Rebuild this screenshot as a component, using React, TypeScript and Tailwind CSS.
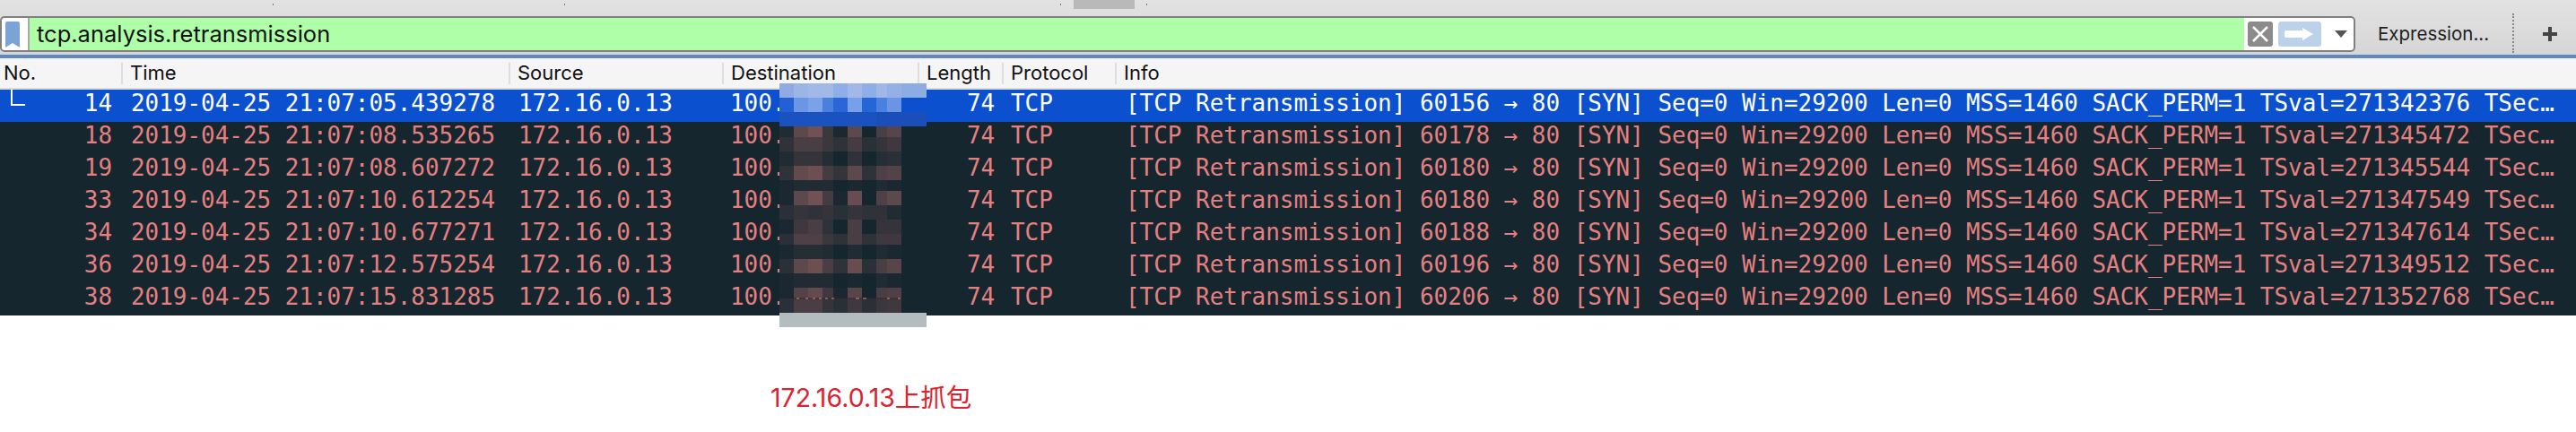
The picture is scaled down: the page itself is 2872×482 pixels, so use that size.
const COLS = 'grid grid-cols-[135px_432px_238px_218px_94px_126px_1fr]'
const MONO = "font-['DejaVu_Sans_Mono','Liberation_Mono',monospace]"

const rows = [
  { no: '14', time: '2019-04-25 21:07:05.439278', port: '60156', ts: '271342376' },
  { no: '18', time: '2019-04-25 21:07:08.535265', port: '60178', ts: '271345472' },
  { no: '19', time: '2019-04-25 21:07:08.607272', port: '60180', ts: '271345544' },
  { no: '33', time: '2019-04-25 21:07:10.612254', port: '60180', ts: '271347549' },
  { no: '34', time: '2019-04-25 21:07:10.677271', port: '60188', ts: '271347614' },
  { no: '36', time: '2019-04-25 21:07:12.575254', port: '60196', ts: '271349512' },
  { no: '38', time: '2019-04-25 21:07:15.831285', port: '60206', ts: '271352768' },
]

// mosaic over the destination column
const mosaicW = [16, 16, 16, 12, 16, 16, 16, 12, 16, 28]
const mosaicH = [16, 16, 16, 12, 16, 16, 16, 12, 16, 16, 16, 12, 16, 16, 16, 12, 16, 16]
const topRows = [
  ['#8fabe2', '#9ab5e6', '#a0b9e8', '#a2b9e6', '#8fade6', '#a1b8e8', '#8fade6', '#a0b7e8', '#94b0e6', '#8cade4'],
  ['#2360d8', '#6a96e4', '#7ba1e8', '#4a7fde', '#2b66d8', '#77a0e8', '#2465d8', '#4a80e0', '#6b95e4', '#0b50cf'],
  ['#1a52c0', '#1a52c0', '#1a52c0', '#1a52c0', '#1a52c0', '#1a52c0', '#1a52c0', '#1a4fba', '#1a4fba', '#1a4fba'],
]
const levels = [
  [0.1, 0.7, 0.9, 0.35, 0.05, 0.7, 0, 0.5, 0.65],
  [0.25, 0.5, 0.5, 0.35, 0.25, 0.45, 0.2, 0.3, 0.4],
  [0.1, 0.3, 0.3, 0.15, 0, 0.25, 0, 0.15, 0.2],
  [0.25, 0.75, 0.85, 0.45, 0.3, 0.7, 0.25, 0.55, 0.6],
  [0.05, 0.1, 0.1, 0.1, 0, 0.05, 0, 0.1, 0.05],
  [0.05, 0.7, 0.9, 0.45, 0.05, 0.8, 0, 0.55, 0.7],
  [0.2, 0.3, 0.25, 0.3, 0.2, 0.3, 0.25, 0.25, 0.1],
  [0.05, 0.4, 0.5, 0.25, 0, 0.5, 0, 0.3, 0.3],
  [0.2, 0.55, 0.55, 0.35, 0.25, 0.5, 0.25, 0.4, 0.4],
  [0.05, 0.15, 0.15, 0.1, 0, 0.1, 0, 0.1, 0.05],
  [0.2, 0.7, 0.85, 0.5, 0.25, 0.8, 0.2, 0.5, 0.65],
  [0.05, 0.1, 0.1, 0.1, 0, 0.05, 0, 0.1, 0.05],
  [0.05, 0.6, 0.75, 0.4, 0.05, 0.65, 0, 0.5, 0.55],
  [0.2, 0.5, 0.5, 0.3, 0.2, 0.4, 0.2, 0.35, 0.4],
]
const mix = (t: number) => {
  const a = [22, 38, 47]
  const b = [124, 86, 88]
  return `rgb(${a.map((v, i) => Math.round(v + (b[i] - v) * t)).join(',')})`
}

const Mosaic = () => {
  let y = 0
  return (
    <svg width="164" height="272" className="absolute left-[869px] top-[93px]">
      {mosaicH.map((h, r) => {
        const top = y
        y += h
        let x = 0
        return mosaicW.map((w, c) => {
          const left = x
          x += w
          let fill = '#b3bcbe'
          if (r < 3) fill = topRows[r][c]
          else if (r < 17) {
            if (c === 9) return null
            fill = mix(levels[r - 3][c])
          }
          return <rect key={`${r}-${c}`} x={left} y={top} width={w} height={h} fill={fill} />
        })
      })}
      <path d="M16 240h120" stroke="#3a2527" strokeWidth="1" />
      <path d="M19 240h3M29 240h3M37 240h3M44 240h3M51 240h3M58 240h3M85 240h4M93 240h4M120 240h3M132 240h3" stroke="#c98a8a" strokeWidth="1" />
    </svg>
  )
}

const HeadCell = ({ label, first }: { label: string; first?: boolean }) => (
  <div className="flex items-center h-[24px]">
    {!first && <div className="w-[2px] h-full bg-[#dedede]" />}
    <div className={first ? 'pl-[4px]' : 'pl-[8px]'}>{label}</div>
  </div>
)

const App = () => (
  <div className="relative w-[2872px] h-[482px] bg-white overflow-hidden font-['Inter','Noto_Sans',sans-serif]">
    <div className="h-[61px] bg-gradient-to-b from-[#e2e2e2] to-[#d6d6d6]">
      <div className="h-[18px] flex items-start">
        <div className="ml-[304px] mt-[4px] w-[1px] h-[2px] bg-[#777]" />
        <div className="ml-[324px] mt-[4px] w-[1px] h-[2px] bg-[#777]" />
        <div className="ml-[552px] mt-[4px] w-[1px] h-[2px] bg-[#777]" />
        <div className="ml-[14px] w-[68px] h-[10px] bg-[#b9b9b9]" />
        <div className="ml-[13px] mt-[4px] w-[1px] h-[2px] bg-[#777]" />
      </div>
      <div className="flex items-center h-[40px]">
        <div className="flex items-center h-full w-[2626px] rounded-[5px] border-2 border-[#808080] bg-white overflow-hidden">
          <div className="w-[29px] flex shrink-0 pl-[4px]">
            <svg width="16" height="29" viewBox="0 0 16 29"><path d="M0 2a2 2 0 0 1 2-2h12a2 2 0 0 1 2 2v27l-8-5-8 5z" fill="#7ba3d6" /></svg>
          </div>
          <div className="w-[2px] h-full bg-[#a8a8a8] shrink-0" />
          <div className="w-[2469px] h-full bg-[#afffa8] pl-[8px] text-[25.5px] leading-[35px] text-[#111]">tcp.analysis.retransmission</div>
          <div className="ml-[4px] w-[28px] h-[28px] rounded-[3px] bg-[#8b8b8b] flex items-center justify-center">
            <svg width="18" height="18" viewBox="0 0 18 18"><path d="M1 1l16 16M17 1L1 17" stroke="#fff" strokeWidth="2.5" /></svg>
          </div>
          <div className="ml-[6px] w-[48px] h-[28px] rounded-[3px] bg-[#bcd2ea] flex items-center justify-center">
            <svg width="34" height="16" viewBox="0 0 34 16"><path d="M2 4h18V1l12 7-12 7v-3H2a2 2 0 0 1-2-2V6a2 2 0 0 1 2-2z" fill="#fff" /></svg>
          </div>
          <svg className="ml-[15px]" width="14" height="8" viewBox="0 0 14 8"><path d="M0 0h14L7 8z" fill="#555" /></svg>
        </div>
        <div className="ml-[25px] w-[150px] text-[20.5px] text-[#222]">Expression...</div>
        <div className="h-[44px] -mt-[2px] border-l-2 border-dotted border-[#888]" />
        <svg className="ml-[32px]" width="16" height="16" viewBox="0 0 16 16"><path d="M6 0h4v6h6v4h-6v6H6v-6H0V6h6z" fill="#444" /></svg>
      </div>
    </div>
    <div className="h-[4px] bg-[#5f87c4]" />
    <div className={`${COLS} h-[33px] items-center bg-[#f5f5f5] text-[22px] text-[#111]`}>
      {['No.', 'Time', 'Source', 'Destination', 'Length', 'Protocol', 'Info'].map((h, i) => (
        <HeadCell key={h} label={h} first={i === 0} />
      ))}
    </div>
    <div className="h-[2px] bg-[#dcdcdc]" />
    <div className={`${MONO} text-[25.95px] leading-[30px] whitespace-pre`}>
      {rows.map((r, i) => (
        <div key={r.no} className={`${COLS} relative h-[36px] ${i === 0 ? 'bg-[#0b50cf] text-white' : 'bg-[#16262f] text-[#e58080]'}`}>
          {i === 0 && <div className="absolute left-[12px] top-0 w-[16px] h-[18px] border-l-2 border-b-2 border-white" />}
          <div className="pr-[10px] text-right">{r.no}</div>
          <div className="pl-[11px]">{r.time}</div>
          <div className="pl-[11px]">172.16.0.13</div>
          <div className="pl-[9px]">100.</div>
          <div className="pl-[55px]">74</div>
          <div className="pl-[10px]">TCP</div>
          <div className="pl-[12px]">{`[TCP Retransmission] ${r.port} → 80 [SYN] Seq=0 Win=29200 Len=0 MSS=1460 SACK_PERM=1 TSval=${r.ts} TSec…`}</div>
        </div>
      ))}
    </div>
    <Mosaic />
    <div className="mt-[71px] ml-[859px] text-[28.5px] text-[#e0202c] font-['Inter','Noto_Sans_CJK_SC',sans-serif]">172.16.0.13上抓包</div>
  </div>
)

export default App
